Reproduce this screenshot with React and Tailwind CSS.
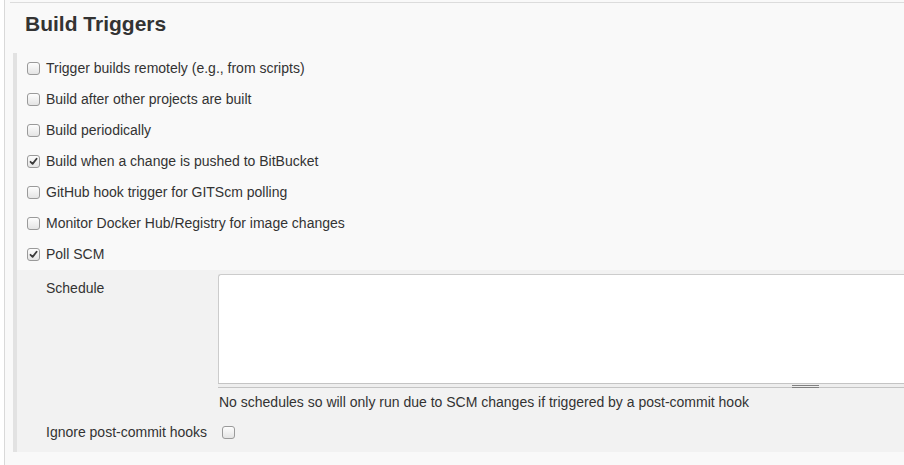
import React from "react";

function Box({ checked }) {
  return (
    <span className="inline-flex h-[13px] w-[13px] shrink-0 items-center justify-center rounded-[3px] border border-[#9a9a9a] bg-gradient-to-b from-[#fdfdfd] to-[#e4e4e4]">
      {checked && (
        <svg width="9" height="9" viewBox="0 0 9 9">
          <path d="M1.5 4.8 L3.6 6.9 L7.6 1.8" fill="none" stroke="#3a3a3a" strokeWidth="1.8" strokeLinecap="round" strokeLinejoin="round" />
        </svg>
      )}
    </span>
  );
}

const rows = [
  ["Trigger builds remotely (e.g., from scripts)", false],
  ["Build after other projects are built", false],
  ["Build periodically", false],
  ["Build when a change is pushed to BitBucket", true],
  ["GitHub hook trigger for GITScm polling", false],
  ["Monitor Docker Hub/Registry for image changes", false],
  ["Poll SCM", true],
];

export default function App() {
  return (
    <div className="h-[465px] w-[904px] overflow-hidden bg-white pl-[4px] text-[14px] text-[#333] [font-family:'Liberation_Sans',Arial,sans-serif]">
      <div className="flex h-full flex-col border-l border-[#d9d9d9] bg-[#f9f9f9] pt-[2px]">
        <div className="ml-[5px] border-t border-[#dcdcdc]" />
        <h2 className="pl-[20px] pt-[9px] text-[21px] font-bold leading-[24px] text-[#333]">Build Triggers</h2>
        <div className="ml-[8px] mt-[17px] flex flex-col border-l-[4px] border-[#e2e2e2]">
          {rows.map(([label, checked]) => (
            <div key={label} className="flex h-[31px] items-center gap-[6px] pl-[10px]">
              <Box checked={checked} />
              <span>{label}</span>
            </div>
          ))}
          <div className="flex flex-col bg-[#f2f2f2] pb-[9px] pt-[4px]">
            <div className="flex">
              <div className="w-[201px] shrink-0 pl-[29px] pt-[4px]">Schedule</div>
              <div className="flex flex-1 flex-col">
                <div className="h-[109px] rounded-tl-[3px] border-l border-t border-[#cccccc] bg-white" />
                <div className="relative h-[5px] border-y border-[#c4c4c4] bg-[#eeeeee]">
                  <div className="absolute left-[574px] top-[1px] h-[3px] w-[27px] border-y border-[#808080]" />
                </div>
                <div className="pl-[1px] pt-[6px] leading-[16px]">No schedules so will only run due to SCM changes if triggered by a post-commit hook</div>
              </div>
            </div>
            <div className="mt-[12px] flex items-center">
              <div className="w-[205px] shrink-0 pl-[29px]">Ignore post-commit hooks</div>
              <Box checked={false} />
            </div>
          </div>
        </div>
      </div>
    </div>
  );
}
